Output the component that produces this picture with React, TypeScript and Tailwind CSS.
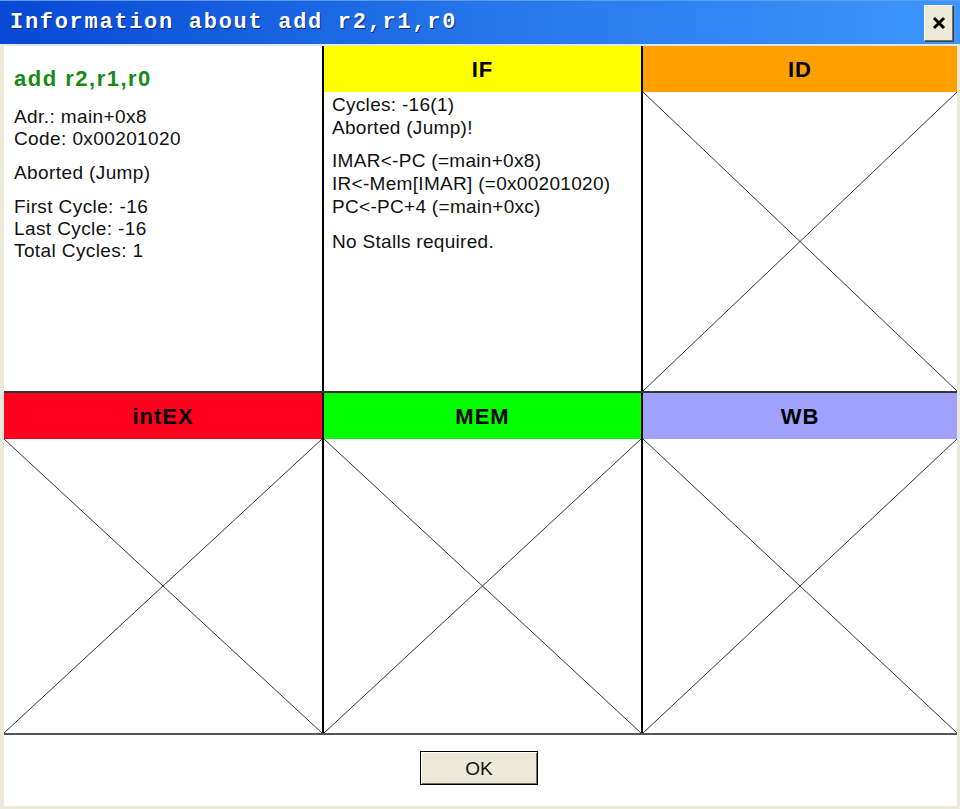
import React from 'react';

const Cross = () => (
  <div className="flex-1 min-h-0 overflow-hidden">
    <svg className="w-full h-full block" viewBox="0 0 100 100" preserveAspectRatio="none">
      <line x1="0" y1="0" x2="100" y2="100" stroke="#333" strokeWidth="1" vectorEffect="non-scaling-stroke" />
      <line x1="100" y1="0" x2="0" y2="100" stroke="#333" strokeWidth="1" vectorEffect="non-scaling-stroke" />
    </svg>
  </div>
);

const Header = ({ label, color }: { label: string; color: string }) => (
  <div className={`h-[46px] shrink-0 flex items-center justify-center text-[22px] font-bold tracking-[1px] text-black ${color}`}>
    {label}
  </div>
);

const App = () => {
  const sans = { fontFamily: '"Liberation Sans", Arial, sans-serif' };

  return (
    <div className="w-[960px] h-[809px] flex flex-col bg-[#ece9d8] overflow-hidden" style={sans}>
      {/* title bar */}
      <div className="h-[44px] shrink-0 flex items-center justify-between pl-[10px] pr-[7px] bg-gradient-to-r from-[#0848d4] via-[#2675ea] to-[#3d96ff] border-t border-[#5b9cf5]">
        <span
          className="text-white font-bold text-[22px] tracking-[1.7px] [text-shadow:1px_1px_0_#0a2a80]"
          style={{ fontFamily: '"Liberation Mono", "Courier New", monospace' }}
        >
          Information about add r2,r1,r0
        </span>
        <div className="w-[29px] h-[36px] flex items-center justify-center bg-[#ece9d8] border border-t-white border-l-white border-r-[#716f64] border-b-[#716f64] shadow-[1px_1px_0_#404040]">
          <svg width="16" height="16" viewBox="0 0 16 16">
            <path d="M3 3 L13 13 M13 3 L3 13" stroke="#000" strokeWidth="3" />
          </svg>
        </div>
      </div>

      {/* body */}
      <div className="flex-1 min-h-0 flex flex-col ml-[4px] mr-[3px] mb-[3px] bg-white border-t-2 border-[#dce6f5]">
        {/* row 1 */}
        <div className="h-[345px] shrink-0 grid grid-cols-[318px_319px_1fr]">
          <div className="pl-[10px] pt-[22px] text-[19px] leading-[22px] tracking-[0.4px] text-[#111]">
            <div className="text-[#168a16] font-bold text-[22px] tracking-[1.5px] mb-[16px]">add r2,r1,r0</div>
            <div>Adr.: main+0x8</div>
            <div>Code: 0x00201020</div>
            <div className="mt-[12px]">Aborted (Jump)</div>
            <div className="mt-[12px]">First Cycle: -16</div>
            <div>Last Cycle: -16</div>
            <div>Total Cycles: 1</div>
          </div>
          <div className="border-l-2 border-black flex flex-col min-h-0">
            <Header label="IF" color="bg-[#ffff00]" />
            <div className="pl-[8px] pt-[1px] text-[19px] leading-[23px] tracking-[0.3px] text-[#111]">
              <div>Cycles: -16(1)</div>
              <div>Aborted (Jump)!</div>
              <div className="mt-[10px]">IMAR&lt;-PC (=main+0x8)</div>
              <div>IR&lt;-Mem[IMAR] (=0x00201020)</div>
              <div>PC&lt;-PC+4 (=main+0xc)</div>
              <div className="mt-[12px]">No Stalls required.</div>
            </div>
          </div>
          <div className="border-l-2 border-black flex flex-col min-h-0">
            <Header label="ID" color="bg-[#ffa000]" />
            <Cross />
          </div>
        </div>

        {/* row 2 */}
        <div className="h-[344px] shrink-0 grid grid-cols-[318px_319px_1fr] border-t-2 border-[#333] border-b-2 border-b-[#555]">
          <div className="flex flex-col min-h-0">
            <Header label="intEX" color="bg-[#ff0020]" />
            <Cross />
          </div>
          <div className="border-l-2 border-black flex flex-col min-h-0">
            <Header label="MEM" color="bg-[#00ff00]" />
            <Cross />
          </div>
          <div className="border-l-2 border-black flex flex-col min-h-0">
            <Header label="WB" color="bg-[#a0a0ff]" />
            <Cross />
          </div>
        </div>

        {/* footer */}
        <div className="flex-1 flex items-start justify-center pt-[16px] pr-[3px]">
          <button className="w-[118px] h-[34px] bg-[#ece9d8] border border-black shadow-[inset_1px_1px_0_#fff,inset_-1px_-1px_0_#716f64] text-[19px] text-[#111] leading-none">
            OK
          </button>
        </div>
      </div>
    </div>
  );
};

export default App;
